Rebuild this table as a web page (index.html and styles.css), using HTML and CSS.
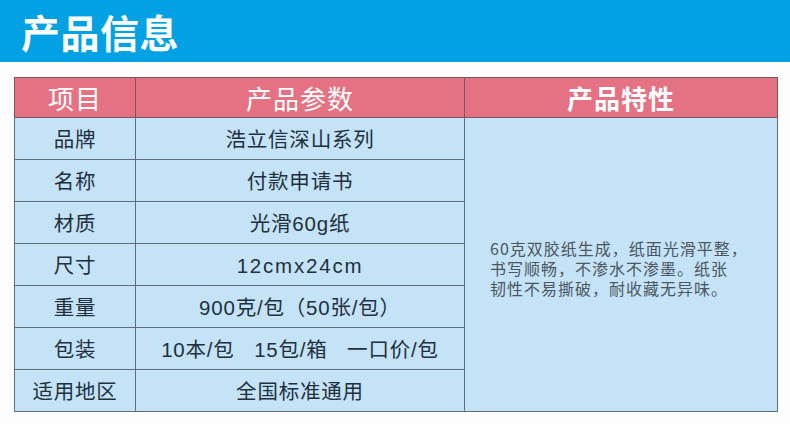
FILE: index.html
```html
<!DOCTYPE html>
<html lang="zh">
<head>
<meta charset="utf-8">
<link rel="stylesheet" href="styles.css">
</head>
<body>
<header class="banner"><h1 class="banner-title">产品信息</h1></header>
<main class="content">
<table class="spec">
<colgroup><col class="c1"><col class="c2"><col class="c3"></colgroup>
<thead>
<tr><th class="h-item">项目</th><th class="h-item">产品参数</th><th class="h-feat">产品特性</th></tr>
</thead>
<tbody>
<tr><td>品牌</td><td>浩立信深山系列</td><td class="feat" rowspan="7"><p class="feat-text">60克双胶纸生成，纸面光滑平整，<br>书写顺畅，不渗水不渗墨。纸张<br>韧性不易撕破，耐收藏无异味。</p></td></tr>
<tr><td>名称</td><td>付款申请书</td></tr>
<tr><td>材质</td><td>光滑60g纸</td></tr>
<tr><td>尺寸</td><td class="latin">12cmx24cm</td></tr>
<tr><td>重量</td><td>900克/包（50张/包）</td></tr>
<tr><td>包装</td><td>10本/包&nbsp;&nbsp;&nbsp;15包/箱&nbsp;&nbsp;&nbsp;一口价/包</td></tr>
<tr><td>适用地区</td><td>全国标准通用</td></tr>
</tbody>
</table>
</main>
</body>
</html>
```

FILE: styles.css
```css
* { box-sizing: border-box; }
html, body { margin: 0; padding: 0; }
body {
  width: 790px;
  height: 424px;
  overflow: hidden;
  background: #fdfdfd;
  font-family: "Liberation Sans", "Noto Sans CJK SC", sans-serif;
}
.banner {
  height: 62px;
  background: #01a1e4;
  display: flex;
  align-items: center;
  padding-left: 21px;
}
.banner-title {
  margin: 0;
  color: #fff;
  font-family: "Noto Sans CJK SC", sans-serif;
  font-size: 39px;
  font-weight: 700;
  line-height: 1;
  letter-spacing: 0.5px;
}
.content {
  padding: 15px 0 0 14px;
}
.spec {
  border-collapse: collapse;
  width: 763px;
  table-layout: fixed;
}
.c1 { width: 121px; }
.c2 { width: 329px; }
.c3 { width: 313px; }
.spec th {
  height: 40px;
  background: #e57283;
  color: #fff;
  font-family: "Noto Sans CJK SC", sans-serif;
  font-weight: 400;
  font-size: 26px;
  letter-spacing: 1px;
  line-height: 1;
  padding: 0;
  border: 1px solid #7d5560;
}
.spec th.h-feat { font-weight: 700; }
.spec td {
  height: 42px;
  background: #c4e3f7;
  color: #22303d;
  font-size: 20.5px;
  letter-spacing: 0.8px;
  text-align: center;
  padding: 3px 0 0;
  line-height: 1;
  border: 1px solid #5f6d7a;
}
.spec td.latin { letter-spacing: 1.8px; }
.spec td.feat {
  vertical-align: middle;
  text-align: left;
  padding: 6px 4px 0 25px;
}
.feat-text {
  margin: 0;
  color: #4c5660;
  font-family: "Noto Sans CJK SC", sans-serif;
  font-size: 16px;
  letter-spacing: 1px;
  line-height: 20px;
  white-space: nowrap;
}
```
